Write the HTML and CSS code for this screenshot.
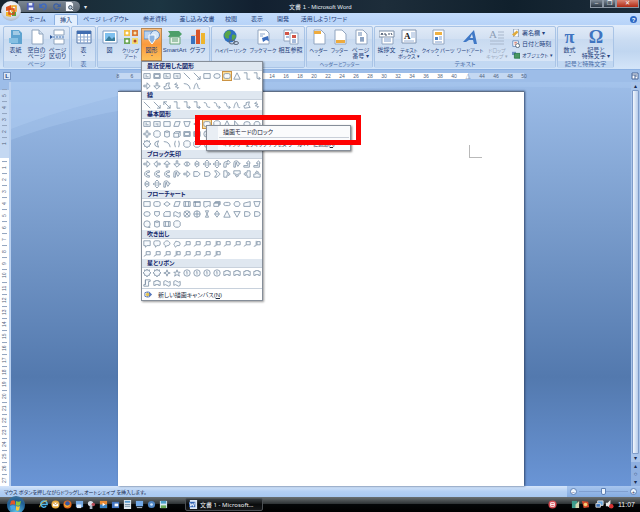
FILE: index.html
```html
<!DOCTYPE html>
<html lang="ja">
<head>
    <meta charset="UTF-8">
    <meta name="viewport" content="width=device-width, initial-scale=1.0">
    <title>文書 1 - Microsoft Word</title>
    <link rel="stylesheet" href="styles.css">
</head>
<body>

    <header class="titlebar">
        <button class="office-button" aria-label="Office ボタン">
            <svg viewBox="0 0 20 20"><path d="M5 6l5-2v5l-5 1z" fill="#e2551e"/><path d="M11 5h4v5h-4z" fill="none" stroke="#f0a020" stroke-width="1.6"/><path d="M5 11h5v5l-5-1z" fill="#f3b62c"/><path d="M11 11h4v4h-4z" fill="#5aa53a"/><path d="M8 8h5v5H8z" fill="none" stroke="#d8481c" stroke-width="1.3"/></svg>
        </button>
        <div class="quick-access">
            <button aria-label="上書き保存"><svg viewBox="0 0 10 10"><path d="M1 1h8v8H1z" fill="#4e5fb8"/><path d="M3 1h4v3H3zM3 6h5v3H3z" fill="#e8eefc"/></svg></button>
            <button aria-label="元に戻す"><svg viewBox="0 0 10 10"><path d="M2 5c1-4 6-4 6 0 0 2-1 3-3 4M1 2v4h4" fill="none" stroke="#3c69c2" stroke-width="1.5"/></svg></button>
            <button aria-label="繰り返し"><svg viewBox="0 0 10 10"><path d="M8 5c-1-4-6-4-6 0s5 4 6 2M9 2v3H6" fill="none" stroke="#3a5fa5" stroke-width="1.3"/></svg></button>
            <button aria-label="印刷プレビュー"><svg viewBox="0 0 10 10"><path d="M1 0h6l2 2v8H1z" fill="#f5f8fc"/><circle cx="6" cy="6" r="2" fill="#bcd" stroke="#345"/><path d="M7 7l2 2" stroke="#345"/></svg></button>
        </div>
        <button class="qa-more" aria-label="クイック アクセスのカスタマイズ">▾</button>
        <h1>文書 1 - Microsoft Word</h1>
        <div class="window-buttons">
            <button aria-label="最小化">‒</button>
            <button aria-label="元のサイズに戻す">❐</button>
            <button class="close" aria-label="閉じる">✕</button>
        </div>
    </header>

    <nav class="tabs">
        <a href="#">ホーム</a>
        <a href="#" class="active">挿入</a>
        <a href="#" class="wide">ページ レイアウト</a>
        <a href="#" class="mid">参考資料</a>
        <a href="#" class="mid">差し込み文書</a>
        <a href="#">校閲</a>
        <a href="#">表示</a>
        <a href="#">開発</a>
        <a href="#" class="wide">活用しよう！ワード</a>
        <button class="help" aria-label="ヘルプ">?</button>
    </nav>

    <section class="ribbon">
        <div class="group">
            <div class="tools">
                <button class="tool"><svg viewBox="0 0 16 16"><path d="M3 1h8l3 3v11H3z" fill="#5ea3d0"/><path d="M5 3h6M5 5h7" stroke="#e6f2fa"/><path d="M1 9h9v5H1z" fill="#86bfe2"/></svg><span>表紙</span><i></i></button>
                <button class="tool"><svg viewBox="0 0 16 16"><path d="M3 1h7l4 4v10H3z" fill="#fff" stroke="#8da3bd"/><path d="M10 1v4h4" fill="#d5e1f0" stroke="#8da3bd"/></svg><span>空白の<br>ページ</span></button>
                <button class="tool"><svg viewBox="0 0 16 16"><path d="M4 1h10v5H4zM4 10h10v5H4z" fill="#fff" stroke="#8da3bd"/><path d="M3 8h12" stroke="#4a7ab8" stroke-dasharray="2 1"/><path d="M0 6l3 2-3 2z" fill="#30599a"/></svg><span>ページ<br>区切り</span></button>
            </div>
            <h2>ページ</h2>
        </div>
        <div class="group">
            <div class="tools">
                <button class="tool"><svg viewBox="0 0 16 16"><path d="M1 2h14v12H1z" fill="#fff" stroke="#5679ab"/><path d="M1 2h14v3H1z" fill="#3f6cb0"/><path d="M1 8h14M1 11h14M4.500 5v9M8 5v9M11.500 5v9" stroke="#8fabd2"/></svg><span>表</span><i></i></button>
            </div>
            <h2>表</h2>
        </div>
        <div class="group">
            <div class="tools">
                <button class="tool"><svg viewBox="0 0 16 16"><path d="M1 2h14v12H1z" fill="#fff" stroke="#7d9cc4"/><path d="M3 4h10v8H3z" fill="#7ec0ee"/><path d="M3 12l4-5 3 3 2-2 1 1v3z" fill="#3b7d9c"/></svg><span>図</span></button>
                <button class="tool kana"><svg viewBox="0 0 16 16"><path d="M1 1h6v6H1z" fill="#f2c14b"/><path d="M9 1h6v6H9z" fill="#d87838"/><path d="M1 9h6v6H1z" fill="#6fa858"/><path d="M9 9h6v6H9z" fill="#f0dc74"/><circle cx="4" cy="4" r="1.500" fill="#fff"/><circle cx="12" cy="12" r="1.500" fill="#b34a2a"/><circle cx="12" cy="4" r="1.500" fill="#f9e6b0"/><circle cx="4" cy="12" r="1.500" fill="#fff"/></svg><span>クリップ<br>アート</span></button>
                <div class="menu-anchor">
                    <button class="tool pressed" aria-expanded="true"><svg viewBox="0 0 16 16"><path d="M0 2h9v8H0z" fill="#b7d2f0" stroke="#6690c4"/><circle cx="11" cy="6" r="4.500" fill="#d5e6f8" stroke="#6690c4"/><path d="M5 6h6v5l-3 4-3-4z" fill="#8ab2e0" stroke="#fff"/></svg><span>図形</span><i></i></button>
                    <div class="shape-menu">
                        <div id="gallery"></div>
                        <button class="new-canvas"><svg viewBox="0 0 10 10"><path d="M1 3l3-1v6L1 7z" fill="#fff" stroke="#5674b0"/><path d="M5 1l4 4-4 4z" fill="#5476bd"/><circle cx="4" cy="5" r="2" fill="#e6c450"/></svg><span>新しい描画キャンバス(<u>N</u>)</span></button>
                        <div class="context-menu">
                            <button class="hot">描画モードのロック</button>
                            <button class="kana">ギャラリーをクイック アクセス ツール バーに追加(<u>A</u>)</button>
                        </div>
                        <div class="marker"></div>
                    </div>
                </div>
                <button class="tool w25"><svg viewBox="0 0 16 16"><path d="M1 2h11l3 3-3 3H1l2-3z" fill="#4d9f68"/><path d="M3 8h10v7H3z" fill="#e8f3ea" stroke="#69a67d"/><path d="M5 10h6M5 12h6" stroke="#5c9c70"/></svg><span>SmartArt</span></button>
                <button class="tool"><svg viewBox="0 0 16 16"><path d="M1 7h4v8H1z" fill="#3971bf"/><path d="M6 1h4v14H6z" fill="#d9542b"/><path d="M11 4h4v11h-4z" fill="#eeb52e"/><path d="M1 7l1-1h4v1zM6 1l1-1h4l-1 1z" fill="#f5b294"/></svg><span>グラフ</span></button>
            </div>
            <h2></h2>
        </div>
        <div class="group">
            <div class="tools">
                <button class="tool kana w35"><svg viewBox="0 0 16 16"><circle cx="7" cy="7" r="6.500" fill="#2f6fc0"/><path d="M3 3c3-3 5-1 5 1s-3 2-2 4-3 2-4 0-1-3 1-5zM9 6c3-1 4 0 4 2l-3 4c-2-2-1-3-1-6z" fill="#58a548"/><ellipse cx="9" cy="13" rx="3" ry="2" fill="none" stroke="#59677a"/><ellipse cx="13" cy="14" rx="2.500" ry="1.500" fill="none" stroke="#59677a"/></svg><span>ハイパーリンク</span></button>
                <button class="tool kana w30"><svg viewBox="0 0 16 16"><path d="M3 1h8l3 3v11H3z" fill="#fff" stroke="#91a5c0"/><path d="M5 5h5M5 7h3" stroke="#8aa5cb"/><path d="M7 9l6-2 1 5-3-1-3 2z" fill="#3c6dbd"/></svg><span>ブックマーク</span></button>
                <button class="tool w25"><svg viewBox="0 0 16 16"><path d="M1 1h8v11H1z" fill="#fff" stroke="#91a5c0"/><path d="M7 4h8v11H7z" fill="#fff" stroke="#91a5c0"/><path d="M2 3h4v3H2z" fill="#d25445"/><path d="M9 6h4v3H9z" fill="#d25445"/><path d="M3 8h3M9 11h4M9 13h4" stroke="#4f78b8"/></svg><span>相互参照</span></button>
            </div>
            <h2></h2>
        </div>
        <div class="group">
            <div class="tools">
                <button class="tool kana"><svg viewBox="0 0 16 16"><path d="M3 1h7l4 4v10H3z" fill="#fff" stroke="#91a5c0"/><path d="M3 2h7v3H3z" fill="#eeab3e"/></svg><span>ヘッダー</span><i></i></button>
                <button class="tool kana"><svg viewBox="0 0 16 16"><path d="M3 1h7l4 4v10H3z" fill="#fff" stroke="#91a5c0"/><path d="M4 11h9v3H4z" fill="#eeab3e"/></svg><span>フッター</span><i></i></button>
                <button class="tool"><svg viewBox="0 0 16 16"><path d="M3 1h7l4 4v10H3z" fill="#fff" stroke="#91a5c0"/><path d="M5 4h4M5 6h4M7 9h4M7 11h4M8 8v5M10 8v5" stroke="#6685b0"/></svg><span>ページ<br>番号 ▾</span></button>
            </div>
            <h2 class="kana">ヘッダーとフッター</h2>
        </div>
        <div class="group">
            <div class="tools">
                <button class="tool"><svg viewBox="0 0 16 16"><path d="M3 4h11v11H3z" fill="#fff" stroke="#91a5c0"/><path d="M0 2h15v6H0z" fill="#fff" stroke="#7c8fa9"/><path d="M2 6l1-2 1 2M6 4v2h2M10 4v2M12 4l1 2" fill="none" stroke="#3d4d66"/><path d="M5 10h7M5 12h7" stroke="#7c9ccc"/></svg><span>挨拶文</span><i></i></button>
                <button class="tool kana w24"><svg viewBox="0 0 16 16"><path d="M1 1h14v13H1z" fill="#fff" stroke="#8095b2"/><text x="3" y="10" class="glyph-box">A</text><path d="M10 4h4M10 6h4M10 8h4M3 12h10" stroke="#95b0d6"/></svg><span>テキスト<br>ボックス ▾</span></button>
                <button class="tool kana w34"><svg viewBox="0 0 16 16"><path d="M3 1h11v14H3z" fill="#fff" stroke="#91a5c0"/><path d="M5 3h7v3H5z" fill="#eeb040"/><path d="M5 8h3v3H5z" fill="#4a80c4"/><path d="M9 8h3M9 10h3M5 13h7" stroke="#7c9ccc"/></svg><span>クイック パーツ</span><i></i></button>
                <button class="tool kana w30"><svg viewBox="0 0 16 16"><path d="M1 13L12 1l3 14h-3l-1-4H7l-3 2zM8 9h3l-1-4z" fill="#3f78c6" fill-rule="evenodd"/></svg><span>ワードアート</span><i></i></button>
                <button class="tool kana w24" disabled><svg viewBox="0 0 16 16"><text x="0" y="9" class="glyph-cap">A</text><path d="M9 3h6M9 6h6M9 9h6M1 12h14M1 15h14" stroke="#a9b8cc"/></svg><span>ドロップ<br>キャップ ▾</span></button>
                <div class="side-list">
                    <button><svg viewBox="0 0 10 10"><path d="M2 0h6v10H2z" fill="#fff" stroke="#8095b2"/><path d="M0 7l6-5 2 2-5 5z" fill="#e0aa3a"/></svg>署名欄 ▾</button>
                    <button><svg viewBox="0 0 10 10"><path d="M1 1h7v7H1z" fill="#fff" stroke="#5a82b8"/><circle cx="7" cy="7" r="2.500" fill="#fff" stroke="#456"/><path d="M3 3h3M3 5h2" stroke="#c54"/></svg>日付と時刻</button>
                    <button class="kana"><svg viewBox="0 0 10 10"><path d="M0 1h5v4H0z" fill="#6f8fc0"/><path d="M3 3h7v6H3z" fill="#4b9760" stroke="#274"/></svg>オブジェクト ▾</button>
                </div>
            </div>
            <h2>テキスト</h2>
        </div>
        <div class="group">
            <div class="tools">
                <button class="tool"><b class="symbol">π</b><span>数式</span><i></i></button>
                <button class="tool w32"><b class="symbol">Ω</b><span>記号と<br>特殊文字 ▾</span></button>
            </div>
            <h2>記号と特殊文字</h2>
        </div>
    </section>

    <div class="ruler-row">
        <button class="tab-type" aria-label="タブの種類">L</button>
        <div class="ruler-track"><div class="ruler" id="ruler"></div></div>
        <button class="ruler-toggle" aria-label="ルーラー"><svg viewBox="0 0 8 8"><path d="M1 1h6v6H1z" fill="#fff" stroke="#4a6796"/><path d="M1 3h3v4M5 2v3" fill="none" stroke="#4a6796"/></svg></button>
    </div>

    <main class="workspace">
        <div class="side-ruler" id="sideRuler"></div>
        <div class="desk">
            <svg class="swoosh" viewBox="0 0 620 404" preserveAspectRatio="none"><path d="M0 0H620V6C360 2 140 4 0 58z" fill="#b4d2f4" opacity=".3"/><path d="M0 47C50 28 90 18 130 8V0H0z" fill="#b4d2f4" opacity=".35"/></svg>
            <article class="page"></article>
        </div>
        <div class="scrollbar">
            <button aria-label="上へ">▴</button>
            <div class="thumb"></div>
            <button aria-label="下へ">▾</button>
            <button class="nav" aria-label="前のページ">▴</button>
            <button class="nav" aria-label="オブジェクトの選択">○</button>
            <button class="nav" aria-label="次のページ">▾</button>
        </div>
    </main>

    <div class="statusbar">
        <span>マウス ボタンを押しながらドラッグし、オートシェイプ を挿入します。</span>
        <div class="zoom">
            <button aria-label="縮小">−</button>
            <input type="range" min="0" max="100" value="50" aria-label="ズーム">
            <button aria-label="拡大">+</button>
        </div>
    </div>

    <footer class="taskbar">
        <button class="start" aria-label="スタート"><svg viewBox="0 0 18 18"><path d="M4 5c2-1 3-1 4 0v4c-1-1-3-1-5 0z" fill="#e4562a"/><path d="M9 5c2 1 3 1 5 0l-1 4c-1 1-3 1-4 0z" fill="#8cc63e"/><path d="M3 10c2-1 4-1 5 0v4c-1-1-3-1-4 0z" fill="#4aa3e8"/><path d="M9 10c1 1 3 1 4 0l-1 4c-1 1-2 1-3 0z" fill="#f8cc3c"/></svg></button>
        <div class="launch">
            <button aria-label="Internet Explorer"><svg viewBox="0 0 10 10"><path d="M8 7a3.500 3.500 0 1 1 1-2H2" fill="none" stroke="#4cb4ec" stroke-width="1.700"/><path d="M1 8C0 5 7 0 9 1" fill="none" stroke="#e8c850"/></svg></button>
            <button aria-label="メール"><svg viewBox="0 0 10 10"><circle cx="5" cy="5" r="4.500" fill="#e9a93a"/><path d="M2 3h6v4H2z" fill="#fff"/><path d="M2 3l3 2 3-2" fill="none" stroke="#c78825"/></svg></button>
            <button aria-label="Firefox"><svg viewBox="0 0 10 10"><circle cx="5" cy="5" r="4.500" fill="#e06b20"/><circle cx="5" cy="4" r="2.500" fill="#3459a5"/><path d="M1 3c1 4 5 4 7 2-1 4-7 4-7-2z" fill="#f6bc3c"/></svg></button>
            <button aria-label="デスクトップの表示"><svg viewBox="0 0 10 10"><path d="M1 1h8v7H1z" fill="#75a9e2"/><path d="M2 5h5v4H2z" fill="#dbe9f8"/></svg></button>
            <button aria-label="ペイント"><svg viewBox="0 0 10 10"><circle cx="4" cy="4" r="3" fill="#d3dbe6"/><circle cx="7" cy="5" r="2" fill="#b74b56"/><path d="M3 6h3v4H3z" fill="#aab4c2"/></svg></button>
            <button aria-label="メディア プレーヤー"><svg viewBox="0 0 10 10"><path d="M1 1h8v8H1z" fill="#e98b32"/><path d="M1 5h8v4H1z" fill="#3784c8"/><path d="M4 3l3 2-3 2z" fill="#fff"/></svg></button>
            <button aria-label="ウィンドウの切り替え"><svg viewBox="0 0 10 10"><path d="M1 2h8v7H1z" fill="#4577c3"/><path d="M4 4h4v3H4z" fill="#fff"/></svg></button>
            <button aria-label="電卓"><svg viewBox="0 0 10 10"><path d="M1 0h8v10H1z" fill="#dfe8ef"/><path d="M2 1h6v2H2z" fill="#5b9bcd"/><path d="M2 5h6M2 7h6" stroke="#718ba3"/></svg></button>
            <button aria-label="リモート デスクトップ"><svg viewBox="0 0 10 10"><path d="M1 1h8v6H1z" fill="#73aae8"/><path d="M2 8h6v1H2z" fill="#c8d5e2"/></svg></button>
            <button aria-label="設定"><svg viewBox="0 0 10 10"><circle cx="5" cy="5" r="4" fill="#4e84c2"/><circle cx="5" cy="5" r="1.500" fill="#cfe2f6"/></svg></button>
            <button aria-label="画像"><svg viewBox="0 0 10 10"><path d="M1 1h8v8H1z" fill="#d8e8f2"/><path d="M2 1h6v3H2z" fill="#4ba1cb"/><path d="M2 6h6v3H2z" fill="#67aa56"/></svg></button>
        </div>
        <button class="task"><svg viewBox="0 0 10 10"><path d="M1 0h8v10H1z" fill="#dfe9f7"/><path d="M0 2h7v6H0z" fill="#2f62b4"/><path d="M1 3l1 4 1.500-3L5 7l1-4" fill="none" stroke="#fff"/></svg>文書 1 - Microsoft...</button>
        <div class="tray">
            <svg class="alert" viewBox="0 0 10 10"><circle cx="5" cy="5" r="4.500" fill="#d44b52"/><path d="M3 3h4v4H3zM3 5h4" fill="none" stroke="#fff"/></svg>
            <svg viewBox="0 0 10 10"><path d="M1 1h6v8H1z" fill="#3d9b8b"/><path d="M5 5l4-4v8H5z" fill="#d4d9b2"/></svg>
            <svg viewBox="0 0 10 10"><path d="M1 1l7 1 1 6-6 1z" fill="#d74a2b"/><circle cx="5" cy="5" r="2" fill="#f5cf77"/></svg>
            <svg class="net" viewBox="0 0 10 10"><path d="M3 1h6v5H3z" fill="#67a6e0" stroke="#ddd"/><path d="M1 4h5v4H1z" fill="#3b72b8" stroke="#ddd"/></svg>
            <svg viewBox="0 0 10 10"><path d="M1 3h2l3-3v9L3 7H1z" fill="#e8e8e8"/><circle cx="7" cy="7" r="2.500" fill="#d63232"/></svg>
            <time>11:07</time>
        </div>
    </footer>

    <script src="script.js"></script>
</body>
</html>
```

FILE: styles.css
```css
* {
    box-sizing: border-box;
}

body {
    margin: 0;
    height: 100vh;
    display: flex;
    flex-direction: column;
    overflow: hidden;
    font-family: "Liberation Sans", "Noto Sans CJK JP", sans-serif;
    font-size: 6px;
    font-feature-settings: "palt";
    line-height: 6px;
    color: #1f3f7c;
    background: #6a93cf;
}

button {
    font: inherit;
    font-feature-settings: inherit;
    color: inherit;
    margin: 0;
    padding: 0;
    border: 0;
    background: none;
    white-space: nowrap;
}

a {
    color: inherit;
    text-decoration: none;
}

h1, h2 {
    margin: 0;
    font-weight: normal;
}

svg {
    display: block;
    flex: none;
}

/* title bar */
.titlebar {
    position: relative;
    flex: none;
    height: 13px;
    display: flex;
    align-items: center;
    background: linear-gradient(90deg, #18242f, #1c3542 25%, #122030 40%, #1d2d3a 60%, #10202c 80%, #1c2c3a);
    color: #e4ebf2;
}

.office-button {
    position: absolute;
    z-index: 2;
    left: 1px;
    top: 1px;
    width: 20px;
    height: 20px;
    border-radius: 50%;
    background: radial-gradient(circle at 50% 30%, #fff, #d2d9e4 60%, #8797ae);
}

.quick-access {
    display: flex;
    gap: 4px;
    height: 11px;
    align-items: center;
    margin-left: 18px;
    padding: 0 6px 0 8px;
    border-radius: 0 6px 6px 0;
    background: linear-gradient(#7b8692, #5a6672);
}

.quick-access svg {
    width: 9px;
    height: 9px;
}

.qa-more {
    width: 10px;
}

.titlebar h1 {
    flex: 1;
    padding-left: 199px;
    font-size: 6px;
}

.window-buttons {
    display: flex;
    align-self: flex-start;
    height: 8px;
    margin-right: 1px;
}

.window-buttons button {
    width: 13px;
    border: 1px solid #8c98a5;
    border-top: 0;
    background: linear-gradient(#7d8995, #2b3744);
    color: #fff;
    line-height: 5px;
}

.window-buttons .close {
    width: 23px;
    background: linear-gradient(#db8573, #b02a14);
}

/* tabs */
.tabs {
    flex: none;
    height: 12px;
    display: flex;
    align-items: flex-end;
    padding-left: 24px;
    background: linear-gradient(#c3dcfc, #b7d3f8);
}

.tabs a {
    width: 26px;
    height: 11px;
    line-height: 11px;
    text-align: center;
    white-space: nowrap;
}

.tabs .active {
    margin-left: 4px;
    width: 24px;
    border: 1px solid #8db2e3;
    border-bottom: 0;
    border-radius: 2px 2px 0 0;
    background: #e4effd;
    line-height: 10px;
}

.tabs .wide {
    width: 56px;
}

.tabs .mid {
    width: 42px;
}

.help {
    width: 7px;
    height: 7px;
    margin: 0 3px 2px auto;
    border-radius: 50%;
    background: #2c68c4;
    color: #fff;
    font-weight: bold;
}

/* ribbon */
.ribbon {
    flex: none;
    height: 45px;
    display: flex;
    gap: 1px;
    padding: 1px 3px;
    border-bottom: 1px solid #8db2e3;
    background: linear-gradient(#e2edfb, #cadcf2 35%, #c0d6f0 60%, #d4e5f9);
}

.group {
    display: flex;
    flex-direction: column;
    justify-content: space-between;
    border: 1px solid #a9c4e6;
    border-radius: 2px;
    background: linear-gradient(#e0eaf7, #d2e0f2 30%, #c8daf0 31%, #dbe8f8);
}

.group h2 {
    height: 8px;
    line-height: 7px;
    font-size: 6px;
    text-align: center;
    white-space: nowrap;
    color: #4d6fa8;
    background: #c2d8f2;
}

.tools {
    display: flex;
    padding: 1px 1px 0;
}

.tool {
    width: 21px;
    height: 33px;
    display: flex;
    flex-direction: column;
    align-items: center;
    line-height: 6px;
}

/* labels made mostly of katakana */
.kana, .group .kana {
    font-size: 5px;
}

.tool svg {
    width: 16px;
    height: 16px;
    margin: 1px 0 2px;
}

.tool i {
    margin-top: 2px;
    border: 1px solid transparent;
    border-top-color: #2c4a80;
    border-bottom: 0;
}

.tool:disabled {
    color: #9aa9bd;
}

.tool.pressed {
    background: linear-gradient(#f6c188, #fb9a3c 50%, #fdc35c);
    outline: 1px solid #b98750;
    outline-offset: -1px;
}

.w24 {
    width: 24px;
}

.w25 {
    width: 25px;
}

.w30 {
    width: 30px;
}

.w32 {
    width: 32px;
}

.w34 {
    width: 34px;
}

.w35 {
    width: 35px;
}

.glyph-box {
    font: bold 9px "Liberation Serif", serif;
    fill: #222;
}

.glyph-cap {
    font: 11px "Liberation Serif", serif;
    fill: #8c9db5;
}

.symbol {
    height: 19px;
    font: bold 18px/18px "Liberation Serif", serif;
    color: #3f74c0;
}

.side-list {
    width: 45px;
    display: flex;
    flex-direction: column;
    gap: 2px;
    padding-left: 3px;
}

.side-list button {
    display: flex;
    align-items: center;
    gap: 2px;
    height: 9px;
}

.side-list svg {
    width: 8px;
    height: 8px;
}

/* shape gallery */
.menu-anchor {
    position: relative;
}

.shape-menu {
    position: absolute;
    z-index: 5;
    left: 0;
    top: 33px;
    width: 122px;
    border: 1px solid #868e99;
    background: #fff;
    box-shadow: 1px 1px 2px rgba(0, 0, 0, 0.4);
}

.shape-menu h3 {
    margin: 0;
    height: 9px;
    padding-left: 5px;
    font-size: 6px;
    line-height: 8px;
    color: #15286b;
    background: #dfe7f0;
    border-bottom: 1px solid #c8d1dc;
}

.shapes {
    display: grid;
    grid-template-columns: repeat(12, 10px);
    grid-auto-rows: 10px;
}

.shapes.tall {
    padding-bottom: 1px;
}

.shapes svg {
    width: 10px;
    height: 10px;
    padding: 1px;
    fill: #f7fafd;
    stroke: #7c8fa3;
}

.shapes .selected {
    background: #fcdf9c;
    outline: 1px solid #cb9344;
    outline-offset: -1px;
}

.new-canvas {
    width: 100%;
    height: 12px;
    display: flex;
    align-items: center;
    gap: 5px;
    padding-left: 2px;
    border-top: 1px solid #c8d1dc;
    color: #222c40;
}

.new-canvas svg {
    width: 9px;
    height: 9px;
}

.context-menu {
    position: absolute;
    left: 64px;
    top: 63px;
    width: 145px;
    padding: 1px 1px 1px 12px;
    border: 1px solid #868e99;
    background: linear-gradient(90deg, #e9eef4 11px, #fafbfc 11px);
    box-shadow: 1px 1px 2px rgba(0, 0, 0, 0.5);
    color: #1c2436;
}

.context-menu button {
    display: block;
    width: 100%;
    height: 11px;
    padding-left: 4px;
    text-align: left;
}

.context-menu .hot {
    border-bottom: 1px solid #c9cfd8;
}

.marker {
    position: absolute;
    left: 53px;
    top: 53px;
    width: 166px;
    height: 30px;
    border: 5px solid #fe0000;
}

/* rulers */
.ruler-row {
    flex: none;
    height: 12px;
    display: flex;
    align-items: center;
    background: #9dbde8;
}

.tab-type {
    width: 8px;
    height: 8px;
    margin-left: 3px;
    border: 1px solid #7593c0;
    background: #dbe8f8;
    font-weight: bold;
    line-height: 6px;
}

.ruler-track {
    flex: 1;
    display: flex;
    justify-content: center;
}

.ruler {
    width: 65.500%;
    height: 6px;
    display: flex;
    justify-content: space-between;
    font-size: 5px;
    color: #51627d;
    background: linear-gradient(90deg, #c4d8f2 13.800%, #fff 13.800%, #fff 86.200%, #c4d8f2 86.200%);
}

.ruler span {
    width: 0;
    display: flex;
    justify-content: center;
}

.ruler-toggle {
    padding-right: 1px;
}

.ruler-toggle svg {
    width: 8px;
    height: 8px;
}

.workspace {
    flex: 1;
    min-height: 0;
    display: flex;
}

.side-ruler {
    width: 11px;
    display: flex;
    flex-direction: column;
    justify-content: space-between;
    align-items: center;
    padding: 7px 2px 0;
    border-right: 2px solid #b9d0ef;
    font-size: 5px;
    color: #51627d;
    background: linear-gradient(#9dbde8 8px, #c4d8f2 8px, #c4d8f2 76px, #fff 76px);
}

.side-ruler span {
    flex: 1;
    line-height: 5px;
    writing-mode: vertical-rl;
    text-align: center;
    transform: rotate(180deg);
    border-bottom: 1px solid #93a5c0;
}

.desk {
    position: relative;
    flex: 1;
    display: flex;
    justify-content: center;
    padding-top: 9px;
    background: linear-gradient(#9dbde8, #86a8d6 22%, #5379ae 73%, #6a95d6);
}

.swoosh {
    position: absolute;
    inset: 0;
    width: 100%;
    height: 100%;
}

.page {
    position: relative;
    width: 65.500%;
    background: #fff;
    border-top: 1px solid #5e6e86;
    box-shadow: 1px 0 2px #33496e;
}

/* crop mark at the text area corner */
.page::after {
    content: "";
    position: absolute;
    right: 13%;
    margin-right: -11px;
    top: 53px;
    width: 12px;
    height: 12px;
    border-left: 1px solid #b9b9b9;
    border-bottom: 1px solid #b9b9b9;
}

.scrollbar {
    width: 9px;
    display: flex;
    flex-direction: column;
    background: #a9c4ea;
    color: #16294f;
}

.scrollbar button {
    height: 8px;
}

.scrollbar .nav {
    background: #8fb0e0;
}

.thumb {
    flex: 1;
    margin: 0 1px;
    border: 1px solid #7e9bc8;
    border-radius: 1px;
    background: linear-gradient(90deg, #f2f7fe, #b6cbe9);
}

/* status bar */
.statusbar {
    flex: none;
    height: 11px;
    display: flex;
    justify-content: space-between;
    align-items: center;
    padding-left: 4px;
    font-size: 5px;
    background: linear-gradient(#d5e5fa, #b3cff3 50%, #a8c8f0);
    color: #1c2c50;
}

.zoom {
    display: flex;
    align-items: center;
    gap: 2px;
    height: 11px;
    padding: 0 3px;
    background: linear-gradient(#a7c5ee, #84abe0);
}

.zoom button {
    width: 7px;
    height: 7px;
    border: 1px solid #5c7fb4;
    border-radius: 50%;
    background: #eef5fd;
    line-height: 4px;
}

.zoom input {
    appearance: none;
    width: 49px;
    height: 7px;
    margin: 0;
    background: linear-gradient(transparent 3px, #7f9fd0 3px, #7f9fd0 4px, transparent 4px);
}

.zoom input::-webkit-slider-thumb {
    appearance: none;
    width: 5px;
    height: 7px;
    border: 1px solid #5c7fb4;
    border-radius: 0 0 2px 2px;
    background: #eef5fd;
}

/* taskbar */
.taskbar {
    flex: none;
    height: 15px;
    display: flex;
    align-items: center;
    background: linear-gradient(#6a7072, #2f3436 45%, #050708 50%, #000);
    color: #eef1f4;
}

.start {
    width: 18px;
    height: 18px;
    margin: 0 14px 0 7px;
    border-radius: 50%;
    background: radial-gradient(circle at 50% 90%, #5cc4ea, #1f5c92 60%, #4a7a9c);
}

.launch {
    display: flex;
    gap: 3px;
}

.launch svg, .tray svg, .task svg {
    width: 9px;
    height: 9px;
}

.task {
    width: 78px;
    height: 13px;
    display: flex;
    align-items: center;
    gap: 2px;
    margin-left: 17px;
    padding-left: 3px;
    border: 1px solid #4b5054;
    border-radius: 2px;
    background: linear-gradient(#33383b, #0a0c0d 50%, #17191b);
    font-family: "Noto Sans", "Noto Sans CJK JP", sans-serif;
}

.tray {
    display: flex;
    align-items: center;
    gap: 1px;
    margin-left: auto;
    padding-right: 5px;
    font-size: 7px;
}

.tray .alert {
    margin-right: 13px;
}

.tray .net {
    margin-left: 4px;
}

.tray time {
    margin-left: 3px;
}
```

FILE: script.js
```js
// outlines on a 10 x 10 grid
const shapes = {
    text: "M1 2h8v6H1zM3 4h2M3 6h4",
    vtext: "M1 2h8v6H1zM6 4v3M4 4v2",
    frame: "M1 2h8v6H1zM2 3h6v4H2z",
    line: "M1 1l8 8",
    arrow: "M1 1l8 8M9 5v4H5",
    darrow: "M1 1l8 8M9 5v4H5M1 5V1h4",
    rect: "M1 2h8v6H1z",
    round: "M3 2h4q2 0 2 2v2q0 2-2 2H3q-2 0-2-2V4q0-2 2-2z",
    oval: "M1 5a4 3 0 1 0 8 0a4 3 0 1 0-8 0z",
    tri: "M5 1l4 8H1z",
    rtri: "M2 1v8h7z",
    invtri: "M1 2h8L5 9z",
    elbow: "M1 1h4v8h4",
    elbowArrow: "M1 1h4v7h4M7 6l2 2-2 2",
    curve: "M1 2c7 0 0 6 8 6",
    curveArrow: "M1 2c7 0 0 6 8 6M7 6l2 2-2 2",
    right: "M1 4h4V1l4 4-4 4V6H1z",
    left: "M9 4H5V1L1 5l4 4V6h4z",
    up: "M4 9V5H1l4-4 4 4H6v4z",
    down: "M4 1v4H1l4 4 4-4H6V1z",
    leftRight: "M1 5l3-3v2h2V2l3 3-3 3V6H4v2z",
    upDown: "M5 1l3 3H6v2h2L5 9 2 6h2V4H2z",
    quad: "M5 0l2 2-1 2h2l2 1-2 1H6l1 2-2 2-2-2 1-2H2L0 5l2-1h2L3 2z",
    bent: "M1 9V5q0-3 3-3h2V0l3 3-3 3V4H4v5z",
    uturn: "M1 9V4q0-3 3-3t3 3h2L6 8 4 4h1q0-1-1-1T3 4v5z",
    bentUp: "M1 9V7h5V4H4l3-3 2 3H8v5z",
    curved: "M8 1Q2 1 2 5t6 4V7Q4 7 4 5t4-2z",
    arc: "M1 2q7 0 8 7",
    wave: "M1 9C3 0 5 0 6 5s2 3 3 3",
    freeform: "M2 9l-1-3 3-1V2l4-1-1 4 2 3z",
    scribble: "M5 1L2 3l4 1-3 2 4 1-2 2",
    para: "M3 2h6L7 8H1z",
    trap: "M1 2h8L7 8H3z",
    diamond: "M5 2l4 3-4 3-4-3z",
    penta: "M5 1l4 3-2 5H3L1 4z",
    hexa: "M3 2h4l2 3-2 3H3L1 5z",
    octa: "M3 1h4l2 2v4L7 9H3L1 7V3z",
    plus: "M4 1h2v3h3v2H6v3H4V6H1V4h3z",
    can: "M2 2q3-2 6 0v6q-3 2-6 0zM2 2q3 2 6 0",
    cube: "M1 4l2-2h6v5L7 9H1zM1 4h6v5M7 4l2-2",
    smile: "M1 5a4 4 0 1 0 8 0a4 4 0 1 0-8 0zM3 6q2 2 4 0M4 3v1M6 3v1",
    donut: "M1 5a4 4 0 1 0 8 0a4 4 0 1 0-8 0zM3 5a2 2 0 1 0 4 0a2 2 0 1 0-4 0z",
    heart: "M5 9L1 4q1-4 4-1 3-3 4 1z",
    sun: "M5 0l1 2 2-1v2l2 2-2 1 0 2-2 0-1 2-1-2-2 0 0-2-2-1 2-2V1l2 1z",
    moon: "M7 1Q2 2 2 5t5 4Q4 5 7 1z",
    parens: "M3 1Q1 5 3 9M7 1q2 4 0 8",
    braces: "M4 1Q2 1 2 3t-1 2q1 0 1 2t2 2M6 1q2 0 2 2t1 2q-1 0-1 2T6 9",
    delay: "M2 2h3q4 0 4 3T5 8H2z",
    chevron: "M2 1h3l4 4-4 4H2l3-4z",
    pentagon: "M1 2h5l3 3-3 3H1z",
    callRight: "M1 1h4v3h2V3l2 2-2 2V6H5v3H1z",
    callDown: "M1 1h8v4H6v2h1L5 9 3 7h1V5H1z",
    callLeft: "M9 1H5v3H3V3L1 5l2 2V6h2v3h4z",
    callUp: "M1 9h8V5H6V3h1L5 1 3 3h1v2H1z",
    predef: "M1 2h8v6H1zM3 2v6M7 2v6",
    internal: "M1 2h8v6H1zM3 2v6M1 3h8",
    doc: "M1 2h8v6q-2-2-4 0T1 8z",
    multi: "M1 4h6v4H1zM2 4V3h6v4M3 3V2h6v4",
    stadium: "M3 3h4q2 0 2 2T7 7H3Q1 7 1 5t2-2z",
    manual: "M1 4l8-2v6H1z",
    circleX: "M1 5a4 4 0 1 0 8 0a4 4 0 1 0-8 0zM2 2l6 6M8 2L2 8",
    circlePlus: "M1 5a4 4 0 1 0 8 0a4 4 0 1 0-8 0zM5 1v8M1 5h8",
    collate: "M3 1h4L3 9h4z",
    sort: "M5 1l3 4-3 4-3-4zM2 5h6",
    tape: "M5 9a4 4 0 1 1 4-4q0 2-2 4h2z",
    offpage: "M2 2h6v4L5 8 2 6z",
    card: "M1 4l2-2h6v6H1z",
    callout: "M1 1h8v6H5L3 9V7H1z",
    roundCallout: "M3 1h4q2 0 2 2v2q0 2-2 2H5L3 9V7Q1 7 1 5V3q0-2 2-2z",
    ovalCallout: "M3 7C-1 5 2 1 5 1s6 5 1 6H5L3 9z",
    cloud: "M2 7Q0 5 2 4q1-4 4-2 3 0 3 3 0 3-4 2L3 9z",
    lineCallout: "M4 2h5v4H4zM4 6L1 8",
    barCallout: "M5 2h4v4H5zM4 1v6L1 8",
    star4: "M5 1l1 3 3 1-3 1-1 3-1-3-3-1 3-1z",
    star5: "M5 1l1 3h3L7 6l1 3-3-2-3 2 1-3-2-2h3z",
    seal: "M1 5a4 4 0 1 0 8 0a4 4 0 1 0-8 0zM4 4l1-1v4",
    ribbon: "M1 3h2V2h4v1h2v5H7V7H3v1H1z",
    scroll: "M3 1h6v2H7v6H1V7h2zM3 1v6",
    waveFlag: "M1 3q2-2 4 0t4 0v5q-2 2-4 0T1 8z"
};

const gallery = [
    ["最近使用した図形", "text frame text vtext line arrow rect oval round* tri elbow elbowArrow right down freeform scribble arc wave"],
    ["線", "line arrow darrow elbow elbowArrow elbowArrow curve curveArrow curveArrow wave freeform scribble"],
    ["基本図形", "text vtext rect para trap diamond round* octa tri rtri oval hexa plus octa can cube frame frame smile donut heart sun round octa sun moon arc parens octa octa braces parens braces parens braces braces"],
    ["ブロック矢印", "right left up down leftRight upDown quad quad bent uturn bentUp bentUp curved curved curved uturn right pentagon delay chevron callRight callDown callLeft callUp upDown quad uturn"],
    ["フローチャート", "rect round diamond para predef internal doc multi stadium hexa manual trap oval offpage card waveFlag circleX circlePlus collate sort tri invtri delay delay tape can predef octa"],
    ["吹き出し", "callout roundCallout ovalCallout cloud lineCallout lineCallout lineCallout barCallout lineCallout lineCallout lineCallout barCallout lineCallout lineCallout lineCallout barCallout lineCallout lineCallout lineCallout barCallout"],
    ["星とリボン", "sun sun star4 star5 seal seal seal seal ribbon ribbon ribbon ribbon scroll ribbon waveFlag waveFlag"]
];

document.getElementById("gallery").innerHTML = gallery.map(([title, list]) => {
    const names = list.split(" ");
    const tall = names.length > 24 ? " tall" : "";
    const buttons = names.map(name => {
        const key = name.replace("*", "");
        const selected = name !== key ? ' class="selected"' : "";
        return `<button${selected} aria-label="${key}"><svg viewBox="0 0 10 10"><path d="${shapes[key]}"/></svg></button>`;
    }).join("");
    return `<h3>${title}</h3><div class="shapes${tall}">${buttons}</div>`;
}).join("");

// horizontal ruler: -8 to 50 characters, the indent mark sits at 42
let marks = "";
for (let n = -8; n <= 50; n += 2) {
    marks += `<span>${n === 0 ? "" : n === 42 ? "△" : Math.abs(n)}</span>`;
}
document.getElementById("ruler").innerHTML = marks;

let sideMarks = "";
for (let n = -5; n <= 27; n++) {
    sideMarks += `<span>${n === 0 ? "" : Math.abs(n)}</span>`;
}
document.getElementById("sideRuler").innerHTML = sideMarks;
```
